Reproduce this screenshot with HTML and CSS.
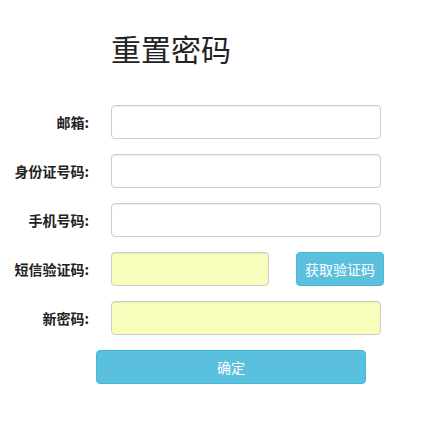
FILE: index.html
```html
<!DOCTYPE html>
<html lang="zh-CN">
<head>
<meta charset="utf-8">
<title>重置密码</title>
<link rel="stylesheet" href="styles.css">
</head>
<body>
<div class="page">
  <h1 class="title">重置密码</h1>
  <form class="form">
    <div class="row">
      <label class="label">邮箱:</label>
      <input class="input" type="text">
    </div>
    <div class="row">
      <label class="label">身份证号码:</label>
      <input class="input" type="text">
    </div>
    <div class="row">
      <label class="label">手机号码:</label>
      <input class="input" type="text">
    </div>
    <div class="row">
      <label class="label">短信验证码:</label>
      <input class="input input-short filled" type="text">
      <button class="btn btn-code" type="button">获取验证码</button>
    </div>
    <div class="row">
      <label class="label">新密码:</label>
      <input class="input filled" type="password">
    </div>
    <div class="row row-submit">
      <button class="btn btn-submit" type="button">确定</button>
    </div>
  </form>
</div>
</body>
</html>
```

FILE: styles.css
```css
* { box-sizing: border-box; }

html, body {
  margin: 0;
  padding: 0;
  background: #fff;
}

body {
  font-family: "Noto Sans CJK SC", "Noto Sans", sans-serif;
  color: #333;
}

.page {
  padding-top: 30px;
}

.title {
  margin: 0 0 39px 111px;
  font-size: 30px;
  line-height: 36px;
  font-weight: 400;
  color: #222;
}

.form {
  display: flex;
  flex-direction: column;
  gap: 15px;
}

.row {
  display: flex;
  align-items: center;
  height: 34px;
}

.label {
  width: 89px;
  margin-right: 22px;
  text-align: right;
  font-size: 14px;
  font-weight: 700;
  color: #222;
}

.input {
  width: 270px;
  height: 34px;
  padding: 6px 12px;
  border: 1px solid #ccc;
  border-radius: 4px;
  background: #fff;
  box-shadow: inset 0 1px 1px rgba(0,0,0,0.075);
  font-size: 14px;
  outline: none;
}

.input.filled {
  background: #fafebd;
}

.input-short {
  width: 158px;
}

.btn {
  height: 34px;
  border: 1px solid #46b8da;
  border-radius: 4px;
  background: #5bc0de;
  color: #fff;
  font-family: "Noto Sans CJK SC", "Noto Sans", sans-serif;
  font-size: 14px;
  padding: 0;
  cursor: pointer;
}

.btn-code {
  width: 88px;
  margin-left: 27px;
}

.row-submit {
  padding-left: 96px;
}

.btn-submit {
  width: 270px;
}
```
